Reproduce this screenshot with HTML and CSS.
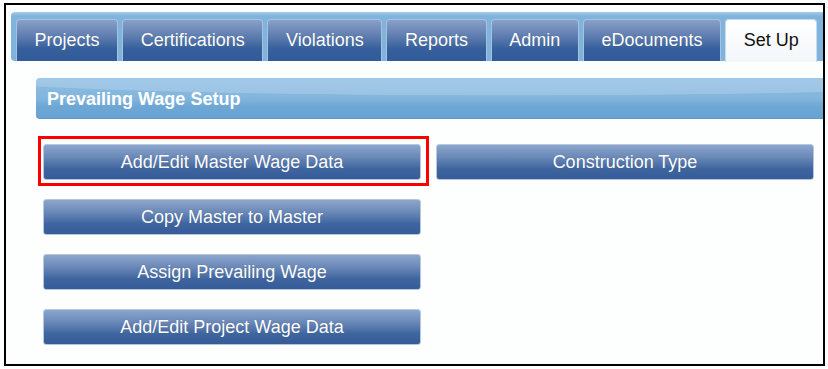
FILE: index.html
```html
<!DOCTYPE html>
<html>
    <head>
        <link rel="stylesheet" href="styles.css">
    </head>
    <body>
        <div class="frame">
            <ul class="tabs">
                <li><a>Projects</a></li>
                <li><a>Certifications</a></li>
                <li><a>Violations</a></li>
                <li><a>Reports</a></li>
                <li><a>Admin</a></li>
                <li><a>eDocuments</a></li>
                <li class="active"><a>Set Up</a></li>
            </ul>

            <div class="panel-head">Prevailing Wage Setup</div>

            <div class="actions">
                <button class="btn marked">Add/Edit Master Wage Data</button>
                <button class="btn">Construction Type</button>
                <button class="btn">Copy Master to Master</button>
                <span></span>
                <button class="btn">Assign Prevailing Wage</button>
                <span></span>
                <button class="btn">Add/Edit Project Wage Data</button>
            </div>
        </div>
    </body>
</html>
```

FILE: styles.css
```css
body {
    margin: 0;
    background: #fff;
    font-family: "Liberation Sans", Arial, sans-serif;
}

.frame {
    margin: 3px 0 0 4px;
    width: 817px;
    height: 359px;
    border: 2px solid #000;
    overflow: hidden;
    background: #fdfefe;
}

/* tab strip */
.tabs {
    display: flex;
    gap: 4px;
    margin: 7px 0 0 5px;
    padding: 7px 0 0 5px;
    width: 820px;
    list-style: none;
    background: linear-gradient(#a6cbe9, #80b4dc 4px, #7fb3dc);
    border-radius: 4px 0 0 4px;
}

.tabs li a {
    display: block;
    height: 41px;
    line-height: 41px;
    padding: 0 17.6px;
    font-size: 18px;
    color: #fff;
    background: linear-gradient(#8aa1c8, #5878ac 45%, #36609c 70%, #315a98);
    border: 1px solid #a4c3e2;
    border-bottom: 0;
    border-radius: 4px 4px 0 0;
    text-shadow: 0 0 1px rgba(0, 0, 0, 0.2);
}

.tabs li.active a {
    color: #111;
    background: linear-gradient(#ffffff, #f3f7fa);
    border-color: #c8dcee;
    text-shadow: none;
    height: 42px;
}

.tabs li.active {
    margin-bottom: -1px;
}

/* section header */
.panel-head {
    margin: 17px 0 0 30px;
    height: 39px;
    line-height: 40px;
    padding-left: 11px;
    font-size: 18px;
    font-weight: bold;
    color: #fff;
    background:
        radial-gradient(ellipse 900px 30px at 60% -2px, rgba(255, 255, 255, 0.18) 60%, rgba(255, 255, 255, 0) 62%),
        linear-gradient(#8ebde2, #82b5dd 50%, #6ea7d4 70%, #68a2d1);
    border-top: 1px solid #9cc6e6;
    border-bottom: 1px solid #5d9acd;
    border-radius: 4px 0 0 4px;
}

/* buttons */
.actions {
    display: grid;
    grid-template-columns: 378px 378px;
    column-gap: 15px;
    row-gap: 19px;
    margin: 25px 0 0 37px;
}

.btn {
    height: 36px;
    padding: 0;
    font-family: "Liberation Sans", Arial, sans-serif;
    font-size: 18px;
    color: #fff;
    background: linear-gradient(#8ca6cc, #6b89b8 35%, #3f659f 70%, #355c99);
    border: 1px solid #b7c8de;
    border-radius: 3px;
    text-shadow: 0 0 1px rgba(0, 0, 0, 0.2);
}

/* red highlight box drawn over the first button */
.btn.marked {
    position: relative;
}

.btn.marked::after {
    content: "";
    position: absolute;
    top: -9px;
    right: -9px;
    bottom: -7px;
    left: -6px;
    border: 3px solid #f00;
}
```
